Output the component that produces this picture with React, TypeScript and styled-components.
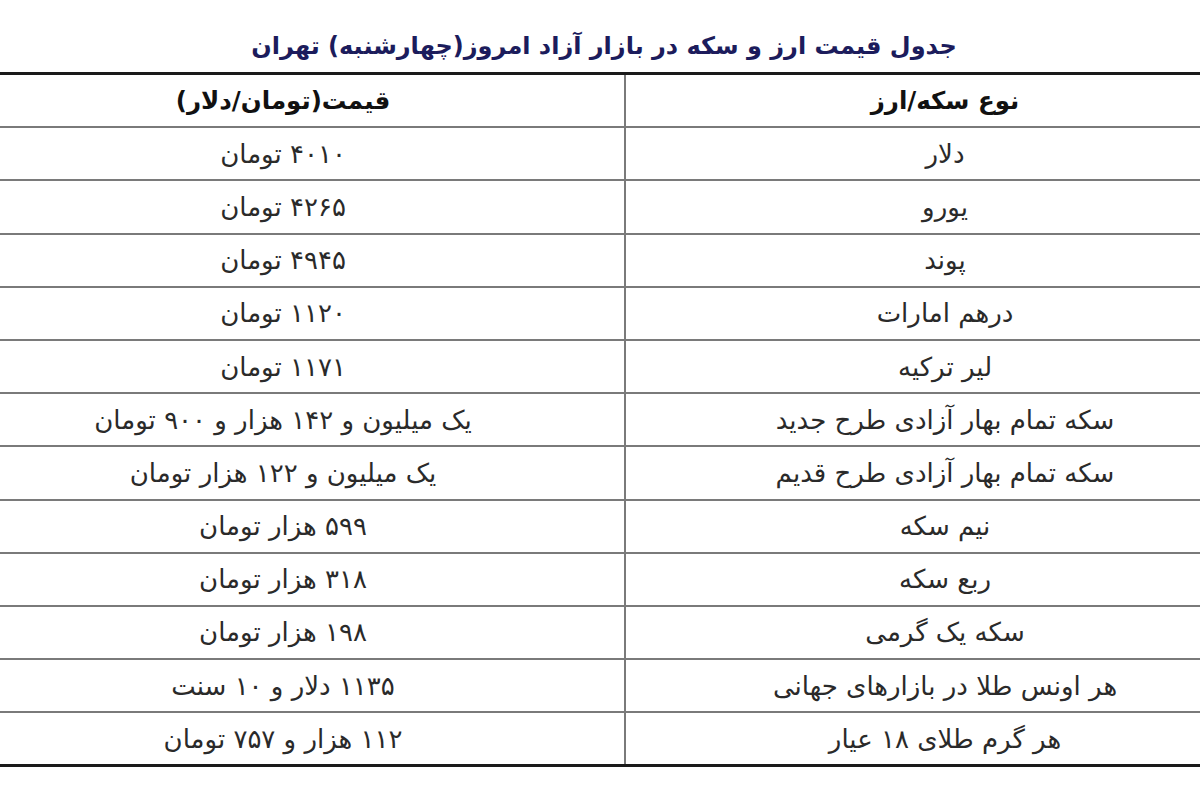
import { createGlobalStyle } from "styled-components"
import styled from "styled-components"

const GlobalStyle = createGlobalStyle`
    body {
        margin: 0;
        background: #ffffff;
        font-family: "DejaVu Sans", sans-serif;
    }
`

const Page = styled.div`
    width: 1200px;
    height: 800px;
    overflow: hidden;
    background: #ffffff;
    direction: rtl;
`

// the table in the picture is cut off on both sides
const Frame = styled.div`
    margin: 0 -64px 0 -56px;
`

const Title = styled.h1`
    margin: 0;
    padding-top: 20px;
    height: 72px;
    box-sizing: border-box;
    text-align: center;
    font-size: 24px;
    font-weight: bold;
    color: #1c1c5c;
    line-height: 52px;
`

const Table = styled.table`
    width: 1320px;
    table-layout: fixed;
    border-collapse: collapse;
    border-top: 3px solid #1a1a1a;
    border-bottom: 3px solid #1a1a1a;
`

const Cell = styled.td<{ $head?: boolean; $w: number }>`
    width: ${p => p.$w}px;
    height: 51.2px;
    padding: 0;
    text-align: center;
    vertical-align: middle;
    font-size: ${p => (p.$head ? "24.5px" : "26px")};
    font-weight: ${p => (p.$head ? "bold" : "normal")};
    color: ${p => (p.$head ? "#111111" : "#2a2a2a")};
    border-bottom: 2px solid #7a7a7a;
    border-left: 2px solid #7a7a7a;
    white-space: nowrap;

    &:last-child {
        border-left: none;
    }
`

const rows: [string, string][] = [
    ["دلار", "۴۰۱۰ تومان"],
    ["یورو", "۴۲۶۵ تومان"],
    ["پوند", "۴۹۴۵ تومان"],
    ["درهم امارات", "۱۱۲۰ تومان"],
    ["لیر ترکیه", "۱۱۷۱ تومان"],
    ["سکه تمام بهار آزادی طرح جدید", "یک میلیون و ۱۴۲ هزار و ۹۰۰ تومان"],
    ["سکه تمام بهار آزادی طرح قدیم", "یک میلیون و ۱۲۲ هزار تومان"],
    ["نیم سکه", "۵۹۹ هزار تومان"],
    ["ربع سکه", "۳۱۸ هزار تومان"],
    ["سکه یک گرمی", "۱۹۸ هزار تومان"],
    ["هر اونس طلا در بازارهای جهانی", "۱۱۳۵ دلار و ۱۰ سنت"],
    ["هر گرم طلای ۱۸ عیار", "۱۱۲ هزار و ۷۵۷ تومان"],
]

export default function App() {
    return (
        <Page>
            <GlobalStyle />
            <Frame>
                <Title>جدول قیمت ارز و سکه در بازار آزاد امروز(چهارشنبه) تهران</Title>
                <Table>
                    <tbody>
                        <tr>
                            <Cell $head $w={638}>نوع سکه/ارز</Cell>
                            <Cell $head $w={682}>قیمت(تومان/دلار)</Cell>
                        </tr>
                        {rows.map((row, index) => (
                            <tr key={`row__${index}`}>
                                <Cell $w={638}>{row[0]}</Cell>
                                <Cell $w={682}>{row[1]}</Cell>
                            </tr>
                        ))}
                    </tbody>
                </Table>
            </Frame>
        </Page>
    )
}
